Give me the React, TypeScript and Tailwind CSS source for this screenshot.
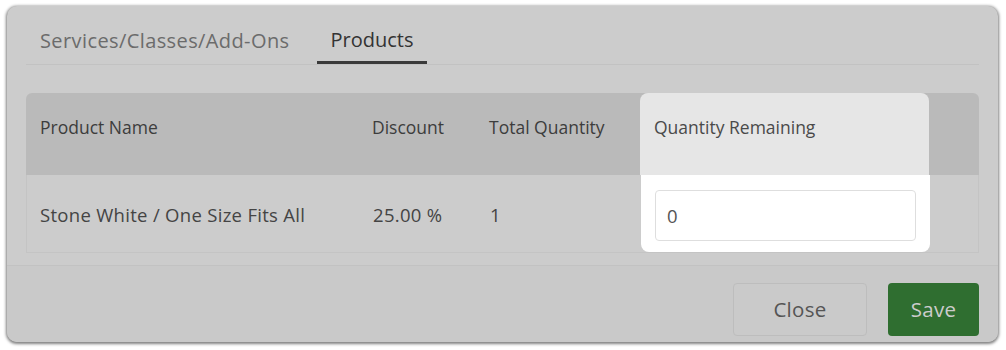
const cols = "grid grid-cols-[332px_117px_165px_289px_1fr]";

export default function App() {
  return (
    <div className="h-[350px] w-[1006px] bg-white pl-[7px] pt-[6px] font-['Open_Sans',sans-serif]">
      <div className="flex h-[336px] w-[991px] flex-col overflow-hidden rounded-[10px] bg-[#cccccc] shadow-[0_1px_3px_1px_rgba(0,0,0,0.5)]">
        <div className="px-[19px] pt-[10px]">
          {/* tabs */}
          <div className="flex gap-[13px] border-b border-[#c2c2c2]">
            <button className="h-[48px] w-[278px] px-[14px] pt-[1px] text-left text-[20px] tracking-[0.4px] text-[#6b6b6b]">
              Services/Classes/Add-Ons
            </button>
            <button className="h-[48px] w-[110px] border-b-[3px] border-[#3a3a3a] pt-[3px] text-center text-[20px] text-[#333333]">
              Products
            </button>
          </div>

          {/* table */}
          <div className="mt-[28px] overflow-hidden rounded-t-[6px]">
            <div className={`${cols} h-[82px] bg-[#bababa] text-[17.5px] leading-[24px] text-[#3d3d3d]`}>
              <div className="px-[14px] pt-[22px]">Product Name</div>
              <div className="px-[14px] pt-[22px]">Discount</div>
              <div className="px-[14px] pt-[22px]">Total Quantity</div>
              <div className="rounded-t-[8px] bg-[#e6e6e6] px-[14px] pt-[22px] text-[#4a4a4a]">
                Quantity Remaining
              </div>
              <div />
            </div>
            <div className={`${cols} border-x border-b border-[#c4c4c4] text-[18.5px] tracking-[0.3px] text-[#444444]`}>
              <div className="flex items-center px-[13px] pt-[3px]">Stone White / One Size Fits All</div>
              <div className="flex items-center px-[14px] pt-[3px]">25.00 %</div>
              <div className="flex items-center px-[14px] pt-[3px]">1</div>
              <div className="rounded-b-[8px] bg-white px-[14px] pb-[11px] pt-[15px]">
                <input
                  defaultValue="0"
                  className="h-[51px] w-full rounded-[4px] border border-[#dedede] bg-white px-[11px] text-[18.5px] text-[#555555] outline-none"
                />
              </div>
              <div />
            </div>
          </div>
        </div>

        {/* footer */}
        <div className="mt-[12px] flex flex-1 justify-end gap-[21px] border-t border-[#c2c2c2] bg-[#c9c9c9] pr-[19px] pt-[17px]">
          <button className="h-[53px] w-[134px] rounded-[4px] border border-[#bdbdbd] bg-[#cacaca] text-[20.5px] tracking-[0.3px] text-[#555555]">
            Close
          </button>
          <button className="h-[53px] w-[91px] rounded-[4px] bg-[#2f6e30] text-[20.5px] tracking-[0.3px] text-[#cccccc]">
            Save
          </button>
        </div>
      </div>
    </div>
  );
}
